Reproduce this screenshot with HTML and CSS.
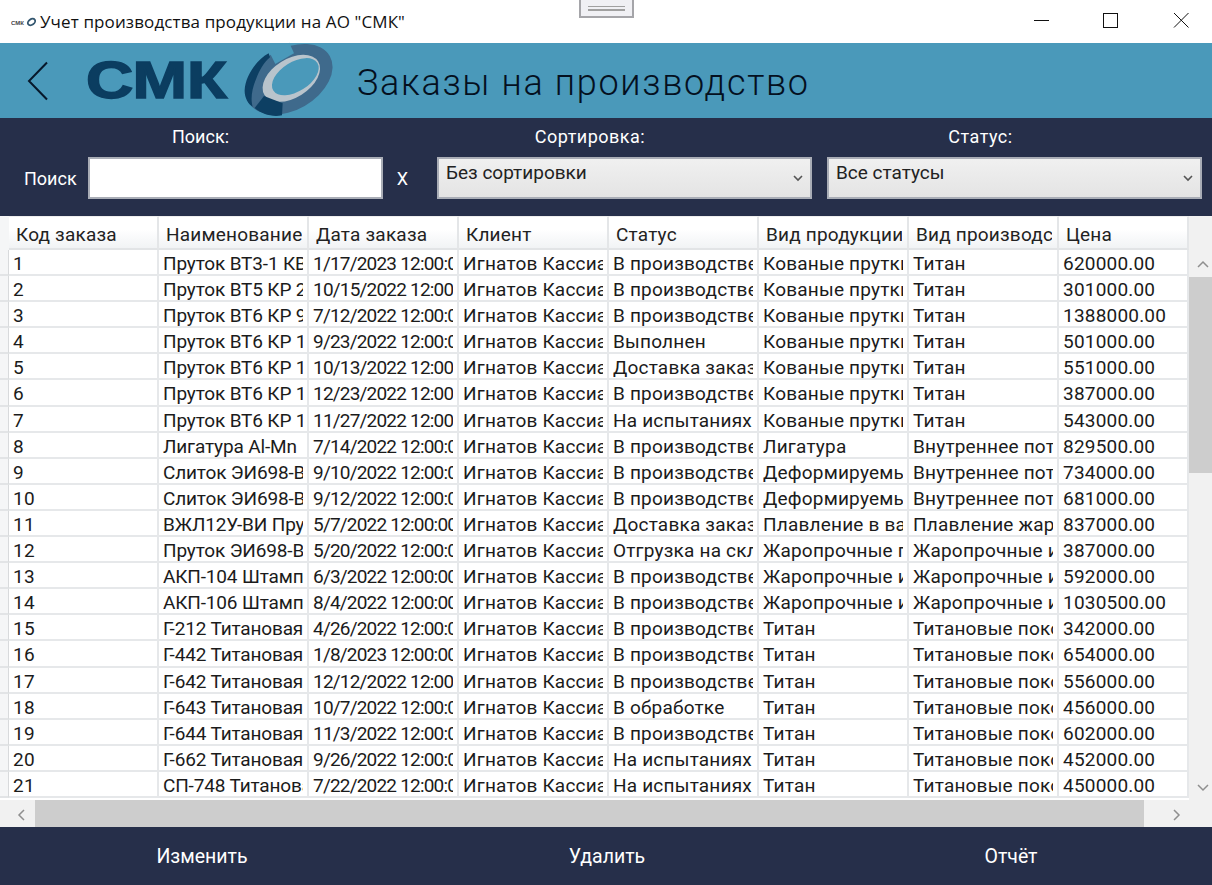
FILE: index.html
```html
<!DOCTYPE html>
<html lang="ru">
  <head>
    <meta charset="UTF-8" />
    <title>Учет производства продукции на АО "СМК"</title>
    <link rel="stylesheet" href="styles.css">
  </head>
  <body>
    <div class="dock-handle"><span></span></div>
    <div class="titlebar">
      <svg class="app-icon" width="25" height="10" viewBox="0 0 25 10">
        <text x="0" y="7.500" font-size="6" font-weight="700" fill="#444" font-family="Liberation Sans">СМК</text>
        <g transform="rotate(-35 20.500 5)">
          <ellipse cx="20.500" cy="5" rx="4" ry="2.800" fill="none" stroke="#33566f" stroke-width="1.800"/>
        </g>
      </svg>
      <span class="window-title">Учет производства продукции на АО "СМК"</span>
      <div class="window-buttons">
        <svg width="16" height="16" viewBox="0 0 16 16"><path d="M1 8.500h15" stroke="#111" fill="none"/></svg>
        <svg class="maximize" width="16" height="16" viewBox="0 0 16 16"><rect x="1.500" y="1.500" width="14" height="14" stroke="#111" fill="none"/></svg>
        <svg width="16" height="16" viewBox="0 0 16 16"><path d="M1 1l14.500 14.500M15.500 1L1 15.500" stroke="#111" fill="none"/></svg>
      </div>
    </div>

    <div class="header">
      <svg class="back" width="22" height="40" viewBox="0 0 22 40"><path d="M20 1.500L2 20l18 18.500" stroke="#07182b" stroke-width="2" fill="none"/></svg>
      <svg class="logo" width="248" height="76" viewBox="0 0 248 76">
        <text x="-1" y="55" font-size="51" font-weight="700" textLength="141" lengthAdjust="spacingAndGlyphs" fill="#0b3d60" font-family="Liberation Sans" stroke="#0b3d60" stroke-width="1.500">СМК</text>
        <g transform="translate(145 -3) scale(0.3333)">
          <ellipse cx="172" cy="118" rx="140" ry="92" transform="rotate(-30 172 118)" fill="#3f6a8c"/>
          <path d="M112 36L172 8L186 40L130 72Z" fill="#4a99ba"/>
          <ellipse cx="178" cy="115" rx="95" ry="58" transform="rotate(-32 178 115)" fill="#b9c4cc"/>
          <ellipse cx="190" cy="110" rx="78" ry="44" transform="rotate(-32 190 110)" fill="#4a99ba"/>
          <path d="M110 40C70 62 40 110 38 150C37 172 48 192 62 200C56 180 58 150 72 118C82 92 96 66 114 52Z" fill="#0d3f63"/>
          <path d="M96 168L152 190L150 226C120 232 88 222 68 204Z" fill="#0d3f63"/>
        </g>
      </svg>
      <h1 class="page-title">Заказы на производство</h1>
    </div>

    <div class="filters">
      <div class="filter filter-search">
        <div class="filter-label">Поиск:</div>
        <div class="search-row">
          <span>Поиск</span>
          <div class="search-box"></div>
          <span class="search-clear">X</span>
        </div>
      </div>
      <div class="filter filter-sort">
        <div class="filter-label">Сортировка:</div>
        <div class="combo">Без сортировки<svg width="10" height="7" viewBox="0 0 10 7"><path d="M1 1l4 4 4-4" stroke="#555" stroke-width="1.600" fill="none"/></svg></div>
      </div>
      <div class="filter filter-status">
        <div class="filter-label">Статус:</div>
        <div class="combo">Все статусы<svg width="10" height="7" viewBox="0 0 10 7"><path d="M1 1l4 4 4-4" stroke="#555" stroke-width="1.600" fill="none"/></svg></div>
      </div>
    </div>

    <div class="grid-area">
      <div class="grid-main">
        <div class="grid" id="grid">
          <div class="corner"></div>
          <div class="head"><span>Код заказа</span></div>
          <div class="head"><span>Наименование</span></div>
          <div class="head"><span>Дата заказа</span></div>
          <div class="head"><span>Клиент</span></div>
          <div class="head"><span>Статус</span></div>
          <div class="head"><span>Вид продукции</span></div>
          <div class="head"><span>Вид производства</span></div>
          <div class="head"><span>Цена</span></div>
        </div>
        <div class="vscroll">
          <svg width="14" height="9" viewBox="0 0 14 9"><path d="M2 7l5-5 5 5" stroke="#8f8f8f" stroke-width="1.500" fill="none"/></svg>
          <div class="vthumb"></div>
          <svg class="vdown" width="14" height="9" viewBox="0 0 14 9"><path d="M2 2l5 5 5-5" stroke="#8f8f8f" stroke-width="1.500" fill="none"/></svg>
        </div>
      </div>
      <div class="hscroll">
        <svg width="9" height="14" viewBox="0 0 9 14"><path d="M7 2L2 7l5 5" stroke="#8f8f8f" stroke-width="1.500" fill="none"/></svg>
        <div class="hthumb"></div>
        <svg width="9" height="14" viewBox="0 0 9 14"><path d="M2 2l5 5-5 5" stroke="#8f8f8f" stroke-width="1.500" fill="none"/></svg>
      </div>
    </div>

    <div class="footer">
      <span>Изменить</span>
      <span>Удалить</span>
      <span>Отчёт</span>
    </div>

    <script src="grid.js"></script>
  </body>
</html>
```

FILE: grid.js
```js
const client = "Игнатов Кассиан"
const rows = [
  ["1", "Пруток ВТ3-1 КВ 20", "1/17/2023 12:00:00 AM", "В производстве", "Кованые прутки", "Титан", "620000.00"],
  ["2", "Пруток ВТ5 КР 20", "10/15/2022 12:00:00 AM", "В производстве", "Кованые прутки", "Титан", "301000.00"],
  ["3", "Пруток ВТ6 КР 90", "7/12/2022 12:00:00 AM", "В производстве", "Кованые прутки", "Титан", "1388000.00"],
  ["4", "Пруток ВТ6 КР 120", "9/23/2022 12:00:00 AM", "Выполнен", "Кованые прутки", "Титан", "501000.00"],
  ["5", "Пруток ВТ6 КР 130", "10/13/2022 12:00:00 AM", "Доставка заказа", "Кованые прутки", "Титан", "551000.00"],
  ["6", "Пруток ВТ6 КР 150", "12/23/2022 12:00:00 AM", "В производстве", "Кованые прутки", "Титан", "387000.00"],
  ["7", "Пруток ВТ6 КР 100", "11/27/2022 12:00:00 AM", "На испытаниях", "Кованые прутки", "Титан", "543000.00"],
  ["8", "Лигатура Al-Mn", "7/14/2022 12:00:00 AM", "В производстве", "Лигатура", "Внутреннее потребление", "829500.00"],
  ["9", "Слиток ЭИ698-ВД", "9/10/2022 12:00:00 AM", "В производстве", "Деформируемые", "Внутреннее потребление", "734000.00"],
  ["10", "Слиток ЭИ698-ВД", "9/12/2022 12:00:00 AM", "В производстве", "Деформируемые", "Внутреннее потребление", "681000.00"],
  ["11", "ВЖЛ12У-ВИ Пруток", "5/7/2022 12:00:00 AM", "Доставка заказа", "Плавление в вакууме", "Плавление жаропрочных", "837000.00"],
  ["12", "Пруток ЭИ698-ВД", "5/20/2022 12:00:00 AM", "Отгрузка на склад", "Жаропрочные прутки", "Жаропрочные изделия", "387000.00"],
  ["13", "АКП-104 Штамповка", "6/3/2022 12:00:00 AM", "В производстве", "Жаропрочные изделия", "Жаропрочные изделия", "592000.00"],
  ["14", "АКП-106 Штамповка", "8/4/2022 12:00:00 AM", "В производстве", "Жаропрочные изделия", "Жаропрочные изделия", "1030500.00"],
  ["15", "Г-212 Титановая", "4/26/2022 12:00:00 AM", "В производстве", "Титан", "Титановые поковки", "342000.00"],
  ["16", "Г-442 Титановая", "1/8/2023 12:00:00 AM", "В производстве", "Титан", "Титановые поковки", "654000.00"],
  ["17", "Г-642 Титановая", "12/12/2022 12:00:00 AM", "В производстве", "Титан", "Титановые поковки", "556000.00"],
  ["18", "Г-643 Титановая", "10/7/2022 12:00:00 AM", "В обработке", "Титан", "Титановые поковки", "456000.00"],
  ["19", "Г-644 Титановая", "11/3/2022 12:00:00 AM", "В производстве", "Титан", "Титановые поковки", "602000.00"],
  ["20", "Г-662 Титановая", "9/26/2022 12:00:00 AM", "На испытаниях", "Титан", "Титановые поковки", "452000.00"],
  ["21", "СП-748 Титановая", "7/22/2022 12:00:00 AM", "На испытаниях", "Титан", "Титановые поковки", "450000.00"],
]

const grid = document.getElementById("grid")

function addCell(className, text) {
  const cell = document.createElement("div")
  cell.className = className
  const inner = document.createElement("span")
  inner.textContent = text
  cell.appendChild(inner)
  grid.appendChild(cell)
}

rows.forEach((row) => {
  addCell("row-head", "")
  addCell("cell", row[0])
  addCell("cell cell-name", row[1])
  addCell("cell cell-date", row[2])
  addCell("cell", client)
  addCell("cell", row[3])
  addCell("cell", row[4])
  addCell("cell", row[5])
  addCell("cell", row[6])
})
```

FILE: styles.css
```css
* {
  box-sizing: border-box;
}

body {
  margin: 0;
  width: 1212px;
  height: 885px;
  overflow: hidden;
  position: relative;
  background-color: #ffffff;
  font-family: "Roboto", "Liberation Sans", sans-serif;
}

.dock-handle {
  position: absolute;
  left: 579px;
  top: 0;
  width: 55px;
  height: 18px;
  background-color: #f0f0f4;
  border: 2px solid #a5a5a9;
  border-top: none;
  display: flex;
  align-items: center;
  justify-content: center;
}

.dock-handle span {
  display: block;
  width: 37px;
  height: 5px;
  border-top: 1px solid #a0a0a0;
  border-bottom: 2px solid #a0a0a0;
}

.titlebar {
  height: 43px;
  display: flex;
  align-items: center;
  padding-left: 11px;
  background-color: #ffffff;
}

.app-icon {
  margin-right: 4px;
}

.window-title {
  font-family: "Open Sans", sans-serif;
  font-size: 17px;
  letter-spacing: 0.120px;
  color: #111111;
}

.window-buttons {
  margin-left: auto;
  display: flex;
  align-items: center;
  gap: 55px;
  padding: 0 23px 3px 0;
}

.maximize {
  margin-left: -2px;
}

.header {
  height: 75px;
  background-color: #4a99ba;
  display: flex;
  align-items: center;
  padding-left: 27px;
}

.logo {
  margin-left: 38px;
  flex-shrink: 0;
  overflow: visible;
}

.page-title {
  margin: 5px 0 0 22px;
  font-size: 36px;
  font-weight: 300;
  color: #04101f;
  letter-spacing: 1.680px;
}

.filters {
  height: 98px;
  background-color: #262f4a;
  color: #ffffff;
  display: flex;
  padding-top: 8px;
  font-size: 18px;
}

.filter-label {
  text-align: center;
  height: 22px;
  line-height: 22px;
}

.filter-search {
  width: 437px;
}

.filter-search .filter-label {
  margin-left: -36px;
}

.filter-sort {
  width: 390px;
}

.filter-sort .filter-label {
  margin-right: 84px;
  letter-spacing: 0.500px;
}

.filter-status {
  width: 375px;
}

.filter-status .filter-label {
  margin-right: 68px;
  letter-spacing: 0.500px;
}

.search-row {
  display: flex;
  align-items: center;
  padding-left: 24px;
  margin-top: 9px;
}

.search-box {
  width: 295px;
  height: 42px;
  margin-left: 11px;
  background-color: #ffffff;
  border: 2px solid #a9adb6;
}

.search-clear {
  margin-left: 14px;
}

.combo {
  position: relative;
  width: 375px;
  height: 42px;
  margin-top: 9px;
  padding: 2px 0 0 7px;
  font-size: 19px;
  color: #222222;
  background: linear-gradient(#f0f0f0, #e4e4e4);
  border: 2px solid #a9adb6;
}

.combo svg {
  position: absolute;
  right: 7px;
  top: 16px;
}

.grid-area {
  height: 611px;
  background-color: #ffffff;
  display: flex;
  flex-direction: column;
}

.grid-main {
  height: 584px;
  display: flex;
}

.grid {
  width: 1189px;
  height: 584px;
  overflow: hidden;
  display: grid;
  grid-template-columns: 9px repeat(7, 150px) 130px;
  grid-template-rows: 34px repeat(21, 26.100px);
  font-size: 19px;
  letter-spacing: 0.200px;
  color: #1b1b1b;
}

.corner,
.row-head {
  background-color: #f5f6f7;
}

.head {
  padding: 6px 5px 0 7px;
  white-space: nowrap;
  background: linear-gradient(#ffffff 40%, #f1f3f5);
  border-right: 2px solid #e4e6e8;
  border-bottom: 2px solid #e2e4e6;
  border-top: 1px solid #eeeeee;
  color: #222222;
}

.head span,
.cell span {
  display: block;
  overflow-x: clip;
}

.row-head {
  border-bottom: 2px solid #e2e4e6;
  border-right: 1px solid #d8dadc;
}

.cell {
  padding: 2px 4px 0 4px;
  line-height: 24px;
  border-right: 2px solid #e6e8ea;
  border-bottom: 2px solid #e6e8ea;
  white-space: nowrap;
}

.cell-name {
  letter-spacing: -0.150px;
}

.cell-date {
  letter-spacing: -0.800px;
}

.vscroll {
  width: 23px;
  background-color: #f1f1f1;
  display: flex;
  flex-direction: column;
  align-items: center;
  padding-top: 44px;
  position: relative;
}

.vscroll svg {
  margin-left: 4px;
}

.vthumb {
  width: 100%;
  height: 196px;
  margin-top: 8px;
  background-color: #cdcdcd;
}

.vscroll .vdown {
  margin-top: auto;
  margin-bottom: 8px;
}

.hscroll {
  height: 27px;
  background-color: #f1f1f1;
  display: flex;
  align-items: center;
  justify-content: space-between;
  padding: 3px 31px 0 17px;
  position: relative;
}

.hthumb {
  position: absolute;
  left: 35px;
  top: 0;
  width: 1109px;
  height: 100%;
  background-color: #cdcdcd;
}

.footer {
  height: 58px;
  background-color: #262f4a;
  color: #ffffff;
  font-size: 19.500px;
  display: grid;
  grid-template-columns: 404px 406px 402px;
  align-items: center;
  text-align: center;
}
```
